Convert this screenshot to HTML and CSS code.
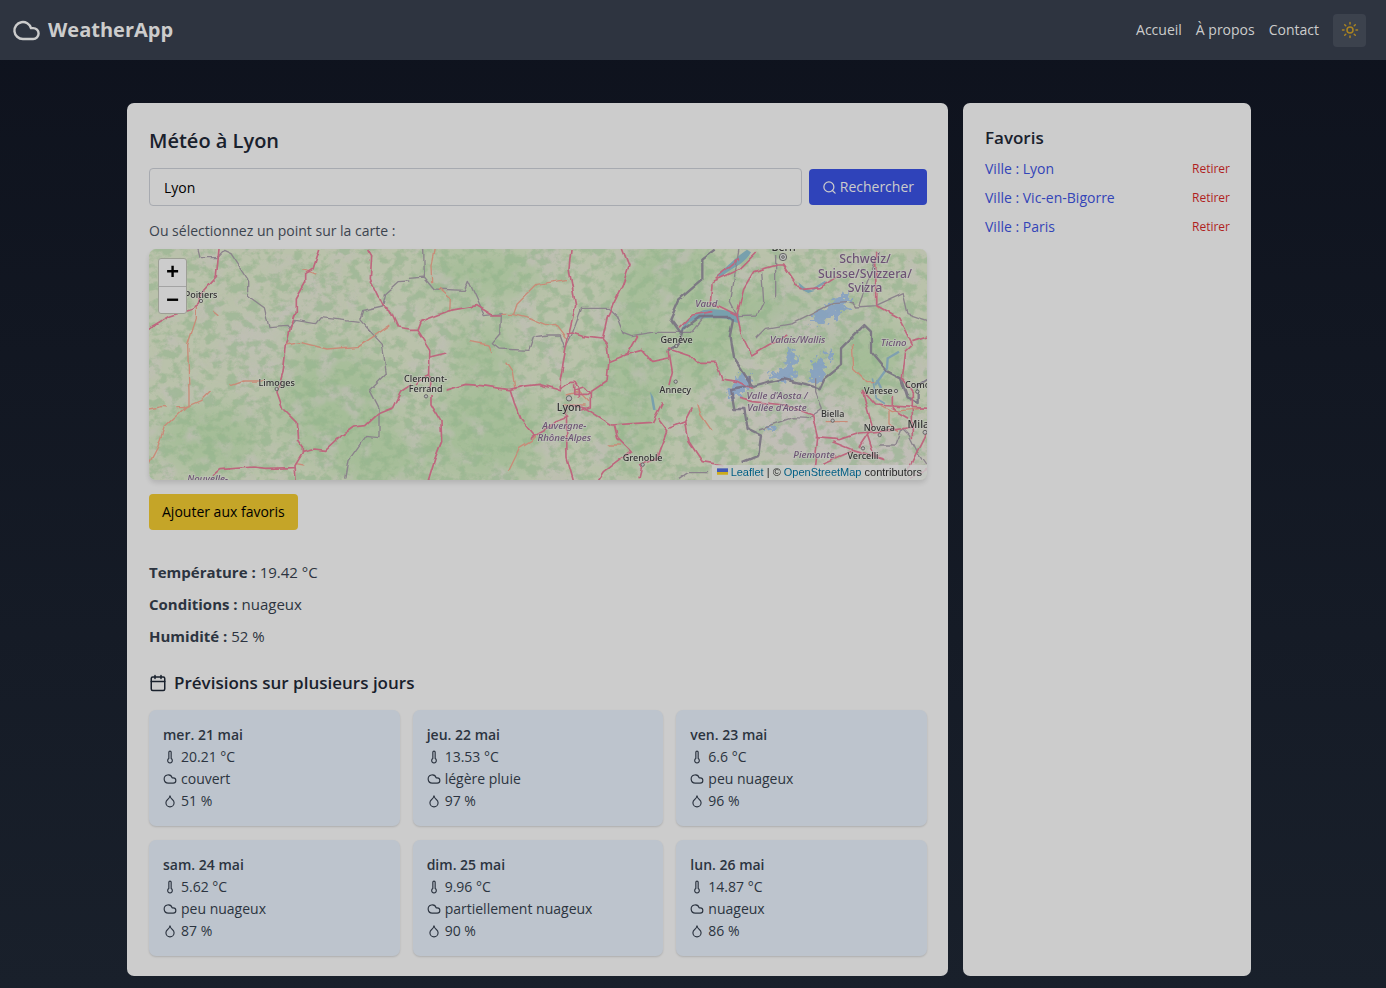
FILE: index.html
```html
<!DOCTYPE html>
<html lang="fr">
<head>
<meta charset="utf-8">
<meta name="viewport" content="width=device-width, initial-scale=1">
<title>WeatherApp</title>
<link rel="stylesheet" href="styles.css">
</head>
<body>
<svg class="sprite" aria-hidden="true">
  <symbol id="cloud" viewBox="0 0 24 24"><path d="M17.5 19H9a7 7 0 1 1 6.71-9h1.79a4.5 4.5 0 1 1 0 9Z"/></symbol>
  <symbol id="sun" viewBox="0 0 24 24"><circle cx="12" cy="12" r="4"/><path d="M12 2v2M12 20v2M4.93 4.93l1.41 1.41M17.66 17.66l1.41 1.41M2 12h2M20 12h2M6.34 17.66l-1.41 1.41M19.07 4.93l-1.41 1.41"/></symbol>
  <symbol id="search" viewBox="0 0 24 24"><circle cx="11" cy="11" r="8"/><path d="m21 21-4.3-4.3"/></symbol>
  <symbol id="calendar" viewBox="0 0 24 24"><path d="M8 2v4M16 2v4M3 10h18"/><rect x="3" y="4" width="18" height="18" rx="2"/></symbol>
  <symbol id="thermo" viewBox="0 0 24 24"><path d="M14 4v10.54a4 4 0 1 1-4 0V4a2 2 0 0 1 4 0Z"/></symbol>
  <symbol id="drop" viewBox="0 0 24 24"><path d="M12 22a7 7 0 0 0 7-7c0-2-1-3.9-3-5.5s-3.5-4-4-6.5c-.5 2.5-2 4.9-4 6.5C6 11.1 5 13 5 15a7 7 0 0 0 7 7z"/></symbol>
</svg>

<header class="topbar">
  <a class="brand" href="#"><svg class="icon brand-icon"><use href="#cloud"/></svg>WeatherApp</a>
  <nav class="nav">
    <a href="#">Accueil</a>
    <a href="#">À propos</a>
    <a href="#">Contact</a>
    <button class="theme" type="button" aria-label="Changer de thème"><svg class="icon icon-lg"><use href="#sun"/></svg></button>
  </nav>
</header>

<main class="layout">
  <section class="panel">
    <h1 class="title">Météo à Lyon</h1>
    <form class="search">
      <input class="field" type="text" value="Lyon" aria-label="Ville">
      <button class="btn btn-primary" type="button"><svg class="icon icon-sm"><use href="#search"/></svg>Rechercher</button>
    </form>
    <p class="hint">Ou sélectionnez un point sur la carte :</p>

    <div class="map">
      <svg class="map-canvas" viewBox="0 12 2334 693" preserveAspectRatio="xMidYMid slice" role="img" aria-label="Carte centrée sur Lyon">
        <defs>
          <filter id="woods" x="0" y="0" width="100%" height="100%" color-interpolation-filters="sRGB">
            <feTurbulence type="fractalNoise" baseFrequency="0.03 0.035" numOctaves="5" seed="8"/>
            <feColorMatrix values="0 0 0 0 0.57  0 0 0 0 0.70  0 0 0 0 0.54  5 0 0 0 -2.3"/>
          </filter>
          <filter id="fields" x="0" y="0" width="100%" height="100%" color-interpolation-filters="sRGB">
            <feTurbulence type="fractalNoise" baseFrequency="0.012" numOctaves="4" seed="21"/>
            <feColorMatrix values="0 0 0 0 0.75  0 0 0 0 0.745  0 0 0 0 0.71  0 4 0 0 -2"/>
          </filter>
          <filter id="soft" x="-50%" y="-50%" width="200%" height="200%"><feGaussianBlur stdDeviation="40"/></filter>
          <filter id="ragged" x="-20%" y="-20%" width="140%" height="140%" color-interpolation-filters="sRGB">
            <feTurbulence type="fractalNoise" baseFrequency="0.07" numOctaves="2" seed="3"/>
            <feDisplacementMap in="SourceGraphic" scale="50" xChannelSelector="R" yChannelSelector="G"/>
          </filter>
          <filter id="wavy" filterUnits="userSpaceOnUse" x="-20" y="-20" width="2380" height="760" color-interpolation-filters="sRGB">
            <feTurbulence type="fractalNoise" baseFrequency="0.03" numOctaves="1" seed="5"/>
            <feDisplacementMap in="SourceGraphic" scale="16" xChannelSelector="R" yChannelSelector="G"/>
          </filter>
        </defs>
        <rect width="2334" height="720" fill="#bac2ab"/>
        <g filter="url(#soft)" fill="#a5bd98">
          <ellipse cx="560" cy="480" rx="170" ry="170"/><ellipse cx="700" cy="640" rx="160" ry="90"/>
          <ellipse cx="1010" cy="560" rx="170" ry="150"/><ellipse cx="1000" cy="320" rx="90" ry="80"/>
          <ellipse cx="1450" cy="400" rx="90" ry="280"/><ellipse cx="1000" cy="90" rx="180" ry="70"/>
          <ellipse cx="1660" cy="330" rx="90" ry="90"/><ellipse cx="1800" cy="200" rx="190" ry="80"/>
          <ellipse cx="2110" cy="330" rx="170" ry="110"/><ellipse cx="180" cy="580" rx="160" ry="100"/>
          <ellipse cx="1600" cy="60" rx="80" ry="120"/><ellipse cx="1480" cy="90" rx="60" ry="100"/>
        </g>
        <rect width="2334" height="720" filter="url(#fields)" opacity=".7"/>
        <g filter="url(#soft)" fill="#c1bdb8">
          <ellipse cx="1900" cy="470" rx="190" ry="70"/><ellipse cx="2020" cy="590" rx="210" ry="80"/>
          <ellipse cx="2250" cy="640" rx="110" ry="80"/><ellipse cx="1990" cy="250" rx="150" ry="40"/>
          <ellipse cx="310" cy="280" rx="90" ry="60" opacity=".7"/><ellipse cx="500" cy="180" rx="80" ry="40" opacity=".6"/>
        </g>
        <rect width="2334" height="720" filter="url(#woods)" opacity=".55"/>

        <g fill="#839fc4" filter="url(#ragged)" opacity=".85">
          <path d="M1980 222l50-40 70-44-4 40-40 40-60 20zM1880 380l30-20 10-50 20 10v80l-50 10zM1990 350l30-20 10 60-30 30-20-20zM1770 390l40 0-10 40-50 30-20-10zM1850 550l40-10-20 20zM1855 385l20-10 10 20-20 8zM2030 320l20 0 0 30-20-5z"/>
        </g>
        <g fill="#78a0ad">
          <path d="M1594 262c8-30 30-48 68-66 44-10 86 4 108 12l2 26c-20 0-30-14-54-14-34-4-76 0-100 14-6 14-12 22-24 28z"/>
          <path d="M1704 90c30-24 52-50 90-76l12 8c-14 26-44 44-70 58-12 10-26 20-32 10zM1948 112l24 20 24 6-18 6-24-12zM1503 440l10 16 7 40-8-2z"/>
        </g>
        <g fill="none" stroke="#7fa0b0" stroke-width="7">
          <path d="M2184 404l12 26M2178 420l36-50 2-30 34-20M1990 134l40-24" />
          <path d="M2170 400l12 60 26 16" stroke-width="5"/>
        </g>

        <g fill="none" stroke="#8b838c" stroke-width="4" stroke-linejoin="round" filter="url(#wavy)">
          <path d="M146 8l8 30 50 0 20-22 22 10 50 76 0 50 50 36 14 60 54-4 6 8 20-26 60 10 14-18 118 14M632 224l8-24 60-14 10-40 40-36 34-2"/>
          <path d="M632 224l40 44 28 30 12 86-50 50 28 54 0 90-40-4-50 70-10 60"/>
          <path d="M824 12l2 84M780 100l46-4 30 36 90 4 12-30 32 70 16 36 52-6M1054 210l-2 60-22 26 20 16 90 4 14-40 40-6 40 0 14 40 20-40 30-80 80 0 24 22 20 50 26 10 60-10 120 0 40-50"/>
          <path d="M1770 12l-16 100-10 60 20 40 60-2 20-40-6-90M1880 30v130M1820 280l30-30 80-14 120-60 60-4 10 14 60-4 80-36 14 60 60 20 20 60M2000 400v40l20 50-40 30-50-2-100 34"/>
          <path d="M2190 600h50l20-50 20 20 30 60 20 30M1680 680l-60 0-30 20M2190 20l-30 80-30 80"/>
        </g>
        <g fill="none" stroke="#766e80" stroke-width="7" stroke-linejoin="round" opacity=".85" filter="url(#wavy)">
          <path d="M1700 14l-40 30 0 60-70 60-26 60 30 40M1560 320l30-30 12-36 50-38 90 0 10 10-10 50 10 60 60 90 50-14 40-10 60 14 50 14 14-30 50-40 0-50 50-50 20-20 20 20 0 60 50 60 40 20 20 60 30 14 0-50 60-40"/>
          <path d="M1802 392l0 30-56 10 10 60 30 0 10 60 40 20-8 60-50 20"/>
        </g>

        <g fill="none" stroke="#c98b78" stroke-width="4" stroke-linejoin="round" filter="url(#wavy)">
          <path d="M142 180l0 40-26 80 4 140 0 40-20 8-18 0M0 492l40-8 14 2M186 436l-30 30-46 20-64 60-20 60-26 50M190 198l18 14M244 422l40-14 60 0M414 300l40-8 80 20 96-8 44-30 50-34M460 74l20 6 20 8M440 656l26 4"/>
          <path d="M856 12l-10 50 2 50M870 130l34 30-2 40M1054 208l40 0 10-30 60-60 90-14M1090 208l40 10 60 24 30-4 30 40M960 290l60 10 10 24M1070 350l20 30 8 54M1160 574l-14 16-34 20-34 70M1250 450l40-10 30 30M1240 480l70 0M1376 600h40"/>
          <path d="M2110 300l4 70 40 40 20 0M2030 530h66M2190 480l40 20 90-10M2220 500l0 40 30 20M1646 480l10 30 30 44M2180 20l0 160 10 10"/>
        </g>
        <g fill="none" stroke="#be677e" stroke-width="5" stroke-linejoin="round" filter="url(#wavy)">
          <path d="M0 250l60-36 70-24 18-12 14-40 40-44 8-82M512 12l-20 60-22 14 0 26-28 50 0 40-18 50-12 50-10 80-18 60 18 50 40 40 4 54 14 20 0 20-22 36 4 56M656 12l12 20-4 70 38 80 20 12 24 52 34 6M460 622l40-10 30 4 50-46 34-24 36-4 36-34 48-20 24-50 30-20M192 690l20-16 100-8 40 4 84-2"/>
          <path d="M780 256h24l10-26 90-34 80-14 46 28 24 0M804 256l38 60 0 120M842 336l50-12M804 420l36-34M890 436l60-18 50 4 40 6 40 6 40-10 50-6 50 14 16 6M1084 434l12 40 20 50 40 48-12 10 14-10 30-16 30-26 40-14M846 450l0 30 30 50 2 60-20 50-20 66M1266 12l-6 60 20 110-20 80-26 140 0 30 30-20 14 0 10 16 0 30M1252 480l2 160 20 70M1420 12l20 50-20 60-44 90-16 70M1250 266l20-2 30 10 60 8 14 16 6 50-6 60-60 40-40 0 0-30M1274 436l30-10 20 20 0 40-30 10M1380 350l50-20 50-14 30 36 50-10M1430 330l34-60M1260 480l50 10 80 50 60-4 60-4 30-60M1396 540l10 40 40 40-80 60-20 30M1526 520l30 40-30 80-56 20M1480 660l-10 40"/>
          <path d="M1590 250l40-40 60-10M1690 110l-6 60 80 40 20-80 30-50 70-20 20 0 50 74 60-6 60-40M1690 110l80-36 50-50M1764 210l14 60 30 60 50-30 60-30M1700 100l70-60M1560 312l60 20 20 20 60 0 20 50 50 8 40 20M1560 320l10 60-10 40M1560 550l50-20 20-40M1610 530l10 60 40 60 60 10M1770 460l40 10 100 10 80 30 16 70-10 90M2000 578l70 6 60-20 100-8 60-10M2050 590l60 24 100 30M2130 606l40-60-30-110 40 44 160 10M2180 20l0 160 70 40 40 80-20 20-10 80 30 40 0 140M2290 290l44-14M2334 560l-60 120M2280 700l54-30M2155 570l20 60M2020 655l90-38M2230 450v40l50 30"/>
        </g>

        <g fill="#bbb" stroke="#666" stroke-width="3">
          <circle cx="156" cy="168" r="5"/><circle cx="383" cy="432" r="5"/><circle cx="831" cy="454" r="5"/><circle cx="1260" cy="460" r="8"/><circle cx="1481" cy="659" r="5"/><circle cx="1582" cy="303" r="5"/><circle cx="1580" cy="410" r="5"/><circle cx="1902" cy="36" r="11"/><circle cx="1902" cy="36" r="4"/><circle cx="2241" cy="438" r="5"/><circle cx="2305" cy="440" r="5"/><circle cx="2051" cy="527" r="5"/><circle cx="2192" cy="570" r="5"/><circle cx="2142" cy="610" r="5"/><circle cx="2328" cy="562" r="6"/>
        </g>
        <g class="town">
          <text x="156" y="158">Poitiers</text><text x="383" y="422">Limoges</text>
          <text x="830" y="411">Clermont-</text><text x="830" y="442">Ferrand</text>
          <text x="1481" y="648">Grenoble</text><text x="1583" y="293">Genève</text><text x="1579" y="443">Annecy</text>
          <text x="2188" y="448">Varese</text><text x="2306" y="430">Como</text><text x="2051" y="516">Biella</text>
          <text x="2191" y="559">Novara</text><text x="2142" y="641">Vercelli</text>
        </g>
        <g class="town city"><text x="1260" y="498">Lyon</text><text x="2328" y="550">Milano</text><text x="1904" y="18">Bern</text></g>
        <g class="region">
          <text x="1246" y="553">Auvergne-</text><text x="1246" y="587">Rhône-Alpes</text><text x="176" y="710">Nouvelle-</text>
          <text x="1672" y="186">Vaud</text><text x="1946" y="294">Valais/Wallis</text><text x="2234" y="304">Ticino</text>
          <text x="1884" y="463">Valle d'Aosta /</text><text x="1884" y="498">Vallée d'Aoste</text><text x="1995" y="640">Piemonte</text>
        </g>
        <g class="country"><text x="2148" y="54">Schweiz/</text><text x="2148" y="98">Suisse/Svizzera/</text><text x="2148" y="141">Svizra</text></g>
      </svg>
      <div class="zoom">
        <button type="button" aria-label="Zoom avant">+</button>
        <button type="button" aria-label="Zoom arrière">−</button>
      </div>
      <div class="credit"><a href="#"><svg class="flag" viewBox="0 0 12 8"><path fill="#4358b5" d="M0 0h12v4H0z"/><path fill="#ccab1c" d="M0 4h12v3H0z"/></svg> Leaflet</a> | © <a href="#">OpenStreetMap</a> contributors</div>
    </div>

    <button class="btn btn-fav" type="button">Ajouter aux favoris</button>

    <div class="current">
      <p><strong>Température :</strong> 19.42 °C</p>
      <p><strong>Conditions :</strong> nuageux</p>
      <p><strong>Humidité :</strong> 52 %</p>
    </div>

    <h2 class="subtitle"><svg class="icon icon-lg"><use href="#calendar"/></svg>Prévisions sur plusieurs jours</h2>
    <div class="days">
      <article class="day"><h3>mer. 21 mai</h3><p><svg class="icon icon-xs"><use href="#thermo"/></svg>20.21 °C</p><p><svg class="icon icon-xs"><use href="#cloud"/></svg>couvert</p><p><svg class="icon icon-xs"><use href="#drop"/></svg>51 %</p></article>
      <article class="day"><h3>jeu. 22 mai</h3><p><svg class="icon icon-xs"><use href="#thermo"/></svg>13.53 °C</p><p><svg class="icon icon-xs"><use href="#cloud"/></svg>légère pluie</p><p><svg class="icon icon-xs"><use href="#drop"/></svg>97 %</p></article>
      <article class="day"><h3>ven. 23 mai</h3><p><svg class="icon icon-xs"><use href="#thermo"/></svg>6.6 °C</p><p><svg class="icon icon-xs"><use href="#cloud"/></svg>peu nuageux</p><p><svg class="icon icon-xs"><use href="#drop"/></svg>96 %</p></article>
      <article class="day"><h3>sam. 24 mai</h3><p><svg class="icon icon-xs"><use href="#thermo"/></svg>5.62 °C</p><p><svg class="icon icon-xs"><use href="#cloud"/></svg>peu nuageux</p><p><svg class="icon icon-xs"><use href="#drop"/></svg>87 %</p></article>
      <article class="day"><h3>dim. 25 mai</h3><p><svg class="icon icon-xs"><use href="#thermo"/></svg>9.96 °C</p><p><svg class="icon icon-xs"><use href="#cloud"/></svg>partiellement nuageux</p><p><svg class="icon icon-xs"><use href="#drop"/></svg>90 %</p></article>
      <article class="day"><h3>lun. 26 mai</h3><p><svg class="icon icon-xs"><use href="#thermo"/></svg>14.87 °C</p><p><svg class="icon icon-xs"><use href="#cloud"/></svg>nuageux</p><p><svg class="icon icon-xs"><use href="#drop"/></svg>86 %</p></article>
    </div>
  </section>

  <aside class="panel">
    <h2 class="side-title">Favoris</h2>
    <ul class="favs">
      <li><a href="#">Ville : Lyon</a><button type="button">Retirer</button></li>
      <li><a href="#">Ville : Vic-en-Bigorre</a><button type="button">Retirer</button></li>
      <li><a href="#">Ville : Paris</a><button type="button">Retirer</button></li>
    </ul>
  </aside>
</main>
</body>
</html>
```
FILE: styles.css
```css
* { box-sizing: border-box; }

body {
  margin: 0;
  min-height: 100vh;
  background: linear-gradient(#0e121d, #19202b);
  color: #2c3440;
  font: 14px/22px "Segoe UI", "Open Sans", "Noto Sans", sans-serif;
}

h1, h2, h3, p, ul { margin: 0; padding: 0; }
a { color: inherit; text-decoration: none; }
button { border: 0; padding: 0; font: inherit; cursor: pointer; }

.sprite { position: absolute; width: 0; height: 0; }
.icon { flex: none; fill: none; stroke: currentColor; stroke-width: 2; stroke-linecap: round; stroke-linejoin: round; }
.icon-xs { width: 14px; height: 14px; }
.icon-sm { width: 15px; height: 15px; }
.icon-lg { width: 18px; height: 18px; }
.brand-icon { width: 29px; height: 29px; }

.topbar {
  display: flex;
  align-items: center;
  justify-content: space-between;
  height: 60px;
  padding: 0 20px 0 12px;
  background: #2e3440;
  color: #cccccc;
}
.brand { display: flex; align-items: center; gap: 7px; font-size: 20px; font-weight: 700; }
.nav { display: flex; align-items: center; gap: 14px; }
.theme {
  display: grid;
  place-items: center;
  width: 33px;
  height: 33px;
  border-radius: 4px;
  background: #3c424d;
  color: #ab8420;
}

.layout {
  display: grid;
  grid-template-columns: minmax(0, 1fr) 288px;
  gap: 15px;
  max-width: 1132px;
  margin: 0 auto;
  padding: 43px 8px 12px 0;
}
.panel { padding: 22px 21px 20px 22px; border-radius: 7px; background: #cccccc; }

.title { margin-bottom: 12px; color: #19212c; font-size: 20px; line-height: 31px; font-weight: 600; }
.search { display: flex; align-items: center; gap: 7px; }
.field {
  flex: 1;
  min-width: 0;
  height: 38px;
  padding: 0 14px;
  border: 1px solid #a7aab0;
  border-radius: 4px;
  background: transparent;
  color: #000;
  font: inherit;
}
.btn {
  display: inline-flex;
  align-items: center;
  gap: 3px;
  height: 36px;
  padding: 0 13px;
  border-radius: 4px;
}
.btn-primary { background: #2f43ba; color: #cccccc; }
.btn-fav { background: #c5a528; color: #000; }
.hint { margin: 14px 0 7px; color: #3c444f; line-height: 22px; }

.map {
  position: relative;
  height: 231px;
  margin-bottom: 14px;
  overflow: hidden;
  border-radius: 7px;
  box-shadow: 0 3px 5px rgba(0, 0, 0, .12);
}
.map-canvas { display: block; width: 100%; height: 100%; }
.map-canvas text { font-family: "Noto Sans", sans-serif; font-weight: 500; text-anchor: middle; paint-order: stroke; stroke: #c8c8c4; stroke-opacity: .55; stroke-width: 5px; }
.town { font-size: 27px; fill: #333333; }
.city { font-size: 32px; }
.region { font-size: 29px; font-style: italic; fill: #6d5474; }
.country { font-size: 37px; fill: #6d5474; }
.zoom {
  position: absolute;
  top: 9px;
  left: 9px;
  display: grid;
  border: 1px solid #9d9f95;
  border-radius: 3px;
  background: #cccccc;
}
.zoom button { width: 27px; height: 27px; background: none; color: #000; font: bold 22px/29px "Liberation Mono", monospace; }
.zoom button + button { border-top: 1px solid #a3a3a3; }
.credit {
  position: absolute;
  right: 0;
  bottom: 0;
  padding: 0 5px;
  background: rgba(204, 204, 204, .8);
  color: #292929;
  font: 11px/15px "Liberation Sans", Arial, sans-serif;
}
.credit a { color: #005f85; }
.flag { width: 11px; height: 8px; }

.current { margin: 29px 0 20px; font-size: 15px; line-height: 26px; }
.current p + p { margin-top: 6px; }
.subtitle { display: flex; align-items: center; gap: 7px; margin-bottom: 13px; color: #19212c; font-size: 17px; line-height: 28px; font-weight: 600; }

.days { display: grid; grid-template-columns: repeat(3, minmax(0, 1fr)); gap: 14px 13px; }
.day { padding: 14px; border-radius: 7px; background: #bdc4cd; box-shadow: 0 1px 2px rgba(0, 0, 0, .15); }
.day h3 { font-size: 14px; font-weight: 600; }
.day p { display: flex; align-items: center; gap: 4px; }

.side-title { margin-bottom: 7px; color: #19212c; font-size: 17px; line-height: 26px; font-weight: 600; }
.favs { display: grid; gap: 7px; list-style: none; }
.favs li { display: flex; justify-content: space-between; color: #3344b8; }
.favs button { background: none; color: #b01e1e; font-size: 12px; }
```
